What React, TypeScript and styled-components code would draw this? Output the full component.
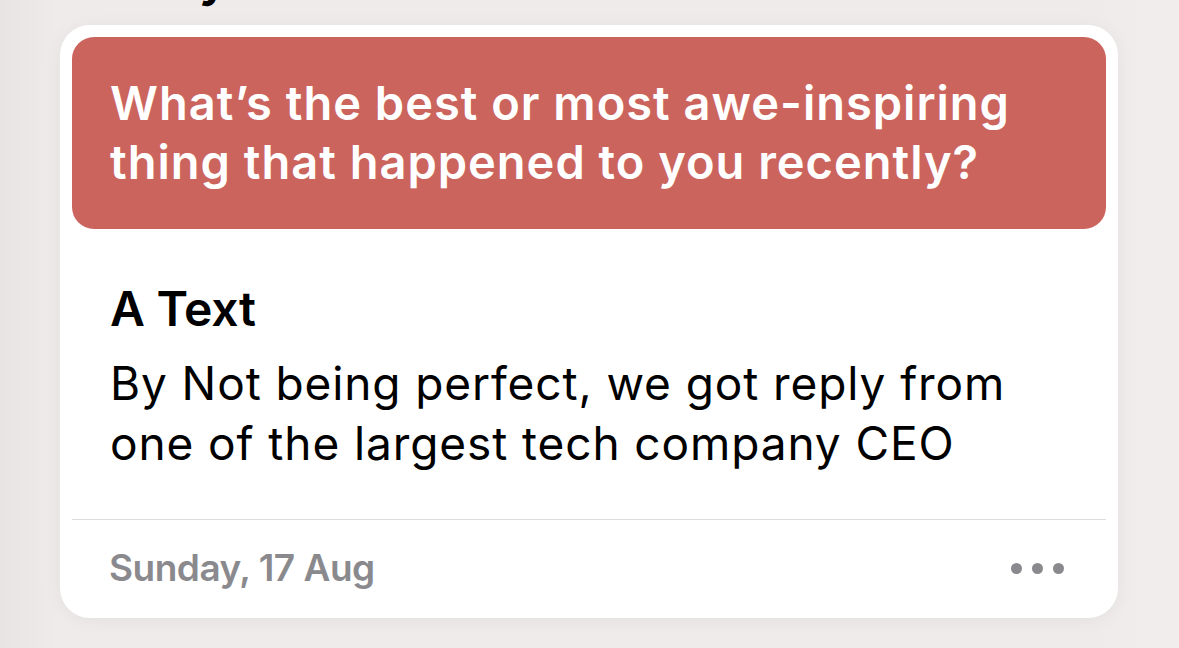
import styled, { createGlobalStyle } from 'styled-components'

const GlobalStyle = createGlobalStyle`
    html, body {
        margin: 0;
        padding: 0;
        background: #efebeb;
        font-family: Inter, "Noto Sans", "Liberation Sans", sans-serif;
        -webkit-font-smoothing: antialiased;
    }
`

const Page = styled.div`
    width: 1179px;
    height: 648px;
    overflow: hidden;
    box-sizing: border-box;
    padding: 0 61px 0 60px;
    background: linear-gradient(90deg, #e8e4e4 0%, #efebeb 5%, #efebeb 92%, #f2eded 100%);
`

const SectionTitle = styled.h1`
    margin: -48px 0 0 31px;
    font-size: 46px;
    line-height: 56px;
    font-weight: 700;
    color: #000;
    letter-spacing: -0.5px;
`

const Card = styled.div`
    margin-top: 17px;
    background: #fff;
    border-radius: 30px;
    padding: 12px;
    box-shadow: 0 2px 18px rgba(0, 0, 0, 0.05);
`

const Prompt = styled.div`
    background: #cc645e;
    border-radius: 22px;
    padding: 36px 38px 38px;
    color: #fff;
    font-size: 47px;
    line-height: 59px;
    font-weight: 600;
    letter-spacing: 1px;
`

const Entry = styled.div`
    padding: 51px 38px 46px;
`

const EntryTitle = styled.div`
    font-size: 48px;
    line-height: 58px;
    font-weight: 600;
    color: #000;
    margin-bottom: 15px;
    letter-spacing: -0.3px;
`

const EntryBody = styled.div`
    font-size: 46px;
    line-height: 60px;
    font-weight: 400;
    color: #000;
    letter-spacing: 0.9px;
`

const Divider = styled.div`
    height: 1px;
    background: #dcdcdc;
`

const Footer = styled.div`
    display: flex;
    align-items: center;
    justify-content: space-between;
    padding: 26px 42px 16px 37px;
`

const DateLabel = styled.div`
    font-size: 37px;
    line-height: 44px;
    font-weight: 600;
    color: #8a8a8e;
    letter-spacing: -0.5px;
`

const MoreButton = styled.div`
    display: flex;
    gap: 10px;
    cursor: pointer;
`

const Dot = styled.span`
    width: 11px;
    height: 11px;
    border-radius: 50%;
    background: #8a8a8e;
`

const App = () => {
    return (
        <>
            <GlobalStyle />
            <Page>
                <SectionTitle>Today</SectionTitle>
                <Card>
                    <Prompt>
                        What’s the best or most awe-inspiring
                        <br />
                        thing that happened to you recently?
                    </Prompt>
                    <Entry>
                        <EntryTitle>A Text</EntryTitle>
                        <EntryBody>
                            By Not being perfect, we got reply from
                            <br />
                            one of the largest tech company CEO
                        </EntryBody>
                    </Entry>
                    <Divider />
                    <Footer>
                        <DateLabel>Sunday, 17 Aug</DateLabel>
                        <MoreButton>
                            <Dot />
                            <Dot />
                            <Dot />
                        </MoreButton>
                    </Footer>
                </Card>
            </Page>
        </>
    )
}

export default App
